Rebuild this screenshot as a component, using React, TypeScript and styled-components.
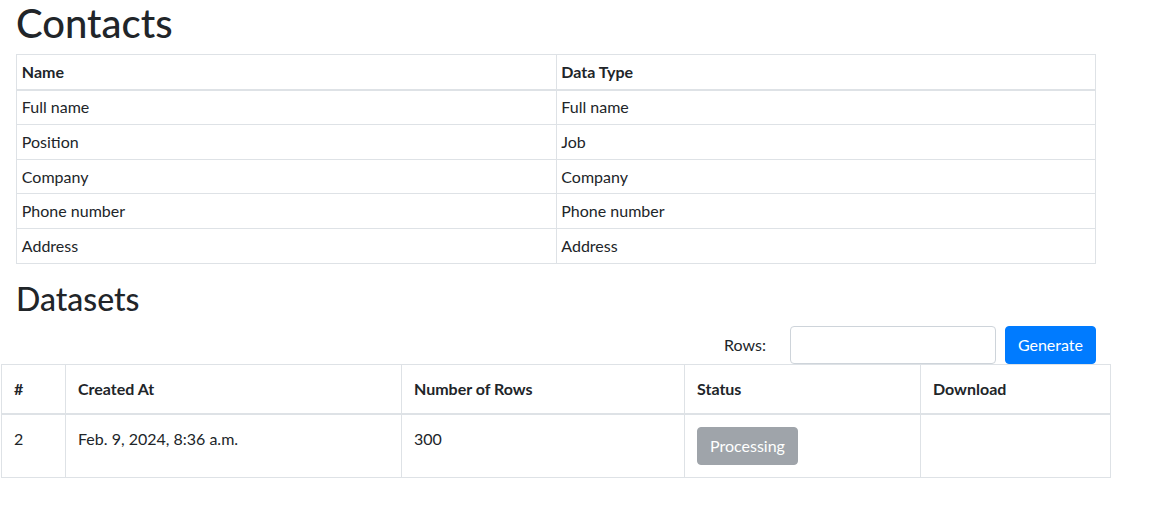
import React from "react";
import styled, { createGlobalStyle } from "styled-components";

const Global = createGlobalStyle`
  html, body { margin: 0; padding: 0; background: #fff; }
  body {
    font-family: Lato, "Noto Sans", sans-serif;
    font-size: 16px;
    line-height: 1.5;
    color: #212529;
  }
  * { box-sizing: border-box; }
`;

const Page = styled.div`
  width: 1080px;
  margin-left: 16px;
`;

const H1 = styled.h1`
  margin: -1px 0 7px;
  font-size: 40px;
  font-weight: 500;
  line-height: 1.2;
`;

const H2 = styled.h2`
  margin: 0 0 8px;
  font-size: 32px;
  font-weight: 500;
  line-height: 1.2;
`;

const Table = styled.table<{ $wide?: boolean }>`
  border-collapse: collapse;
  width: ${(p) => (p.$wide ? "1109px" : "100%")};
  margin: ${(p) => (p.$wide ? "0 -15px" : "0 0 16px")};
  table-layout: fixed;
  color: #212529;
`;

const Col = styled.col<{ $w: number }>`
  width: ${(p) => p.$w}px;
`;

const Th = styled.th<{ $sm?: boolean }>`
  text-align: left;
  font-weight: 700;
  padding: ${(p) => (p.$sm ? "4.8px" : "12px")};
  border: 1px solid #dee2e6;
  border-bottom-width: 2px;
  vertical-align: bottom;
`;

const Td = styled.td<{ $sm?: boolean }>`
  padding: ${(p) => (p.$sm ? "4.8px" : "12px")};
  border: 1px solid #dee2e6;
  vertical-align: top;
`;

const FormRow = styled.div`
  display: flex;
  justify-content: flex-end;
  align-items: center;
  height: 38px;
`;

const Label = styled.label`
  font-size: 16px;
  margin-right: 24px;
`;

const Input = styled.input`
  width: 206px;
  height: 38px;
  border: 1px solid #ced4da;
  border-radius: 4px;
  padding: 6px 12px;
  font: inherit;
  margin-right: 9px;
`;

const Button = styled.button<{ $variant: "primary" | "secondary" }>`
  height: 38px;
  padding: 6px 12px;
  font: inherit;
  font-size: 16px;
  line-height: 1.5;
  border-radius: 4px;
  border: 1px solid ${(p) => (p.$variant === "primary" ? "#007bff" : "#6c757d")};
  background: ${(p) => (p.$variant === "primary" ? "#007bff" : "#6c757d")};
  color: #fff;
  opacity: ${(p) => (p.$variant === "secondary" ? 0.65 : 1)};
`;

const contacts = [
  ["Full name", "Full name"],
  ["Position", "Job"],
  ["Company", "Company"],
  ["Phone number", "Phone number"],
  ["Address", "Address"],
];

const colWidths = [64, 336, 283, 236, 190];

export default function App() {
  return (
    <>
      <Global />
      <Page>
        <H1>Contacts</H1>
        <Table>
          <thead>
            <tr>
              <Th $sm>Name</Th>
              <Th $sm>Data Type</Th>
            </tr>
          </thead>
          <tbody>
            {contacts.map(([a, b]) => (
              <tr key={a}>
                <Td $sm>{a}</Td>
                <Td $sm>{b}</Td>
              </tr>
            ))}
          </tbody>
        </Table>
        <H2>Datasets</H2>
        <FormRow>
          <Label htmlFor="rows">Rows:</Label>
          <Input id="rows" type="number" />
          <Button $variant="primary">Generate</Button>
        </FormRow>
        <Table $wide>
          <colgroup>
            {colWidths.map((w, i) => (
              <Col key={i} $w={w} />
            ))}
          </colgroup>
          <thead>
            <tr>
              <Th>#</Th>
              <Th>Created At</Th>
              <Th>Number of Rows</Th>
              <Th>Status</Th>
              <Th>Download</Th>
            </tr>
          </thead>
          <tbody>
            <tr>
              <Td>2</Td>
              <Td>Feb. 9, 2024, 8:36 a.m.</Td>
              <Td>300</Td>
              <Td>
                <Button $variant="secondary" disabled>
                  Processing
                </Button>
              </Td>
              <Td></Td>
            </tr>
          </tbody>
        </Table>
      </Page>
    </>
  );
}
